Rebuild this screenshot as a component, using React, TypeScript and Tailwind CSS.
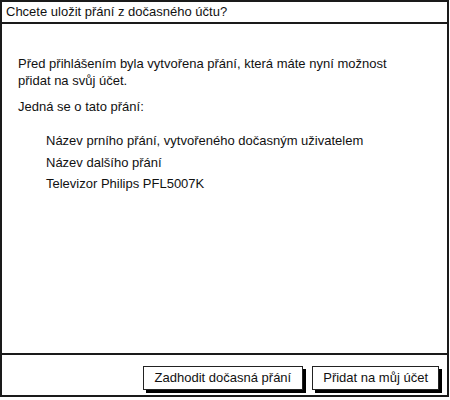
export default function App() {
  const wishes = [
    "Název prního přání, vytvořeného dočasným uživatelem",
    "Název dalšího přání",
    "Televizor Philips PFL5007K",
  ]

  return (
    <div
      className="h-[400px] w-[450px] bg-white text-[13px] text-[#111]"
      style={{ fontFamily: '"Liberation Sans", Arial, sans-serif' }}
    >
      <div className="flex h-[397px] w-[449px] flex-col border-2 border-[#1a1a1a]">
        {/* Title */}
        <div className="flex h-[22px] items-center border-b-2 border-[#1a1a1a] pl-[4px]">
          Chcete uložit přání z dočasného účtu?
        </div>

        {/* Content */}
        <div className="flex-1 px-[16px] pt-[31px] leading-[17px]">
          <p>
            Před přihlášením byla vytvořena přání, která máte nyní možnost
            <br />
            přidat na svůj účet.
          </p>
          <p className="mt-[9px]">Jedná se o tato přání:</p>
          <ul className="mt-[17px] pl-[28px]">
            {wishes.map((w) => (
              <li key={w} className="h-[21.5px] leading-[17px]">
                {w}
              </li>
            ))}
          </ul>
        </div>

        {/* Footer */}
        <div className="flex h-[42px] items-start justify-end gap-[9px] border-t-2 border-[#1a1a1a] pr-[8px] pt-[11px]">
          <button className="h-[24px] border border-[#222] bg-white px-[11px] shadow-[3px_3px_0_#000]">
            Zadhodit dočasná přání
          </button>
          <button className="h-[24px] border border-[#222] bg-white px-[10px] shadow-[3px_3px_0_#000]">
            Přidat na můj účet
          </button>
        </div>
      </div>
    </div>
  )
}
